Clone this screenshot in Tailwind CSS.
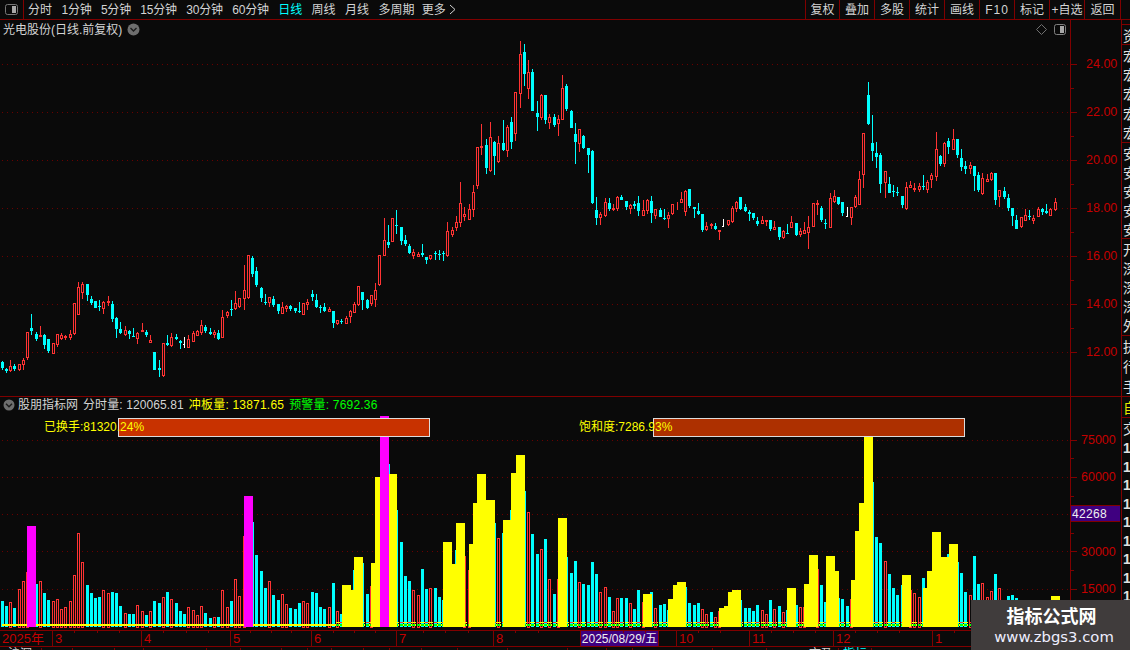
<!DOCTYPE html>
<html lang="zh">
<head>
<meta charset="utf-8">
<title>光电股份</title>
<script src="https://cdn.jsdelivr.net/npm/@tailwindcss/browser@4"></script>
</head>
<body class="w-[1130px] h-[650px] overflow-hidden relative bg-[#0a0a0a] text-[12px] leading-none text-[#d4d4d4] font-['Liberation_Sans','Noto_Sans_CJK_SC',sans-serif]">

<!-- toolbar -->
<header class="flex h-[20px] border-b border-[#800000] items-stretch">
  <div class="w-[24px] border-r border-[#800000] flex items-center justify-center">
    <svg width="13" height="11" viewBox="0 0 13 11"><rect x="0.5" y="0.5" width="12" height="10" rx="2" fill="none" stroke="#777"/><rect x="7" y="2" width="4" height="7" fill="#a8a8a8"/></svg>
  </div>
  <nav class="flex items-center gap-[9.4px] pl-[4px]">
    <span>分时</span><span class="tracking-[-0.2px]">1分钟</span><span class="tracking-[-0.2px]">5分钟</span><span class="tracking-[-0.2px]">15分钟</span><span class="tracking-[-0.2px]">30分钟</span><span class="tracking-[-0.2px]">60分钟</span>
    <span class="text-[#00ffff]">日线</span><span>周线</span><span>月线</span><span>多周期</span>
    <span class="-ml-[2px] flex items-center gap-[3px]">更多
      <svg width="7" height="11" viewBox="0 0 7 11"><path d="M1 1l5 4.5L1 10" fill="none" stroke="#d4d4d4"/></svg>
    </span>
  </nav>
  <div class="ml-auto flex items-stretch mr-[9px]">
    <span class="w-[34px] border-l border-[#800000] flex items-center justify-center">复权</span>
    <span class="w-[35px] border-l border-[#800000] flex items-center justify-center">叠加</span>
    <span class="w-[35px] border-l border-[#800000] flex items-center justify-center">多股</span>
    <span class="w-[35px] border-l border-[#800000] flex items-center justify-center">统计</span>
    <span class="w-[35px] border-l border-[#800000] flex items-center justify-center">画线</span>
    <span class="w-[35px] border-l border-[#800000] flex items-center justify-center tracking-[1px]">F10</span>
    <span class="w-[35px] border-l border-[#800000] flex items-center justify-center">标记</span>
    <span class="w-[35px] border-l border-[#800000] flex items-center justify-center whitespace-nowrap">+自选</span>
    <span class="w-[37px] border-x border-[#800000] flex items-center justify-center">返回</span>
  </div>
</header>

<div class="flex h-[630px]">
  <!-- charts column -->
  <main class="w-[1070px] shrink-0 flex flex-col">
    <section class="relative h-[377px] border-b border-[#800000]">
      <svg id="price" class="block" width="1070" height="376" viewBox="0 20 1070 376" shape-rendering="crispEdges"></svg>
      <div class="absolute left-[3px] top-[3px] flex items-center gap-[5px]">
        <span class="text-[12px]">光电股份(日线.前复权)</span>
        <svg width="13" height="13" viewBox="0 0 13 13"><circle cx="6.5" cy="6.5" r="6" fill="#6e6e6e"/><path d="M3.5 5l3 3 3-3" fill="none" stroke="#1c1c1c" stroke-width="1.4"/></svg>
      </div>
      <div class="absolute right-[4px] top-[4px] flex items-center gap-[7px]">
        <svg width="11" height="11" viewBox="0 0 11 11"><path d="M5.5 .5l5 5-5 5-5-5z" fill="none" stroke="#707070"/></svg>
        <svg width="12" height="11" viewBox="0 0 12 11"><rect x="0.5" y="0.5" width="11" height="10" rx="2" fill="none" stroke="#808080"/><rect x="6" y="2" width="4" height="7" fill="#a8a8a8"/></svg>
      </div>
    </section>

    <section class="relative h-[233px]">
      <svg id="vol" class="block" width="1070" height="233" viewBox="0 397 1070 233" shape-rendering="crispEdges"></svg>
      <div class="absolute left-[3px] top-[1px] flex items-center h-[14px] whitespace-nowrap">
        <svg class="mr-[3px]" width="12" height="12" viewBox="0 0 12 12"><circle cx="6" cy="6" r="5.5" fill="#6e6e6e"/><path d="M3 4.7l3 3 3-3" fill="none" stroke="#1c1c1c" stroke-width="1.4"/></svg>
        <span>股朋指标网</span>
        <span class="ml-[5px] tracking-[0.1px]">分时量: 120065.81</span>
        <span class="ml-[5px] tracking-[0.2px] text-[#ffff00]">冲板量: 13871.65</span>
        <span class="ml-[5px] tracking-[0.2px] text-[#00ff00]">预警量: 7692.36</span>
      </div>
      <div class="absolute left-[118px] top-[21px] w-[312px] h-[19px] bg-[#c83200] border border-[#dcdcdc]"></div>
      <div class="absolute left-[44px] top-[24px] text-[#ffff00] whitespace-nowrap">已换手:81320.24%</div>
      <div class="absolute left-[653px] top-[21px] w-[312px] h-[19px] bg-[#ad3000] border border-[#dcdcdc]"></div>
      <div class="absolute left-[579px] top-[24px] text-[#ffff00] whitespace-nowrap">饱和度:7286.93%</div>
    </section>

    <!-- date axis -->
    <div class="relative flex h-[17px] w-[1130px] border-t border-b border-[#800000] text-[#c40000] text-[13px] items-stretch">
      <span class="w-[52px] pl-[2px] flex items-center">2025年</span>
      <span class="w-[89px] pl-[2px] flex items-center border-l border-[#800000]">3</span>
      <span class="w-[89px] pl-[2px] flex items-center border-l border-[#800000]">4</span>
      <span class="w-[81px] pl-[2px] flex items-center border-l border-[#800000]">5</span>
      <span class="w-[85px] pl-[2px] flex items-center border-l border-[#800000]">6</span>
      <span class="w-[97px] pl-[2px] flex items-center border-l border-[#800000]">7</span>
      <span class="w-[87px] pl-[2px] flex items-center border-l border-[#800000]">8</span>
      <span class="w-[79px] flex items-center justify-center bg-[#3f0080] text-[#f0f0f0] text-[12px] border-x border-[#800000] whitespace-nowrap">2025/08/29/五</span>
      <span class="w-[17px]"></span>
      <span class="w-[73px] pl-[2px] flex items-center border-l border-[#800000]">10</span>
      <span class="w-[84px] pl-[2px] flex items-center border-l border-[#800000]">11</span>
      <span class="w-[99px] pl-[2px] flex items-center border-l border-[#800000]">12</span>
      <span class="w-[39px] pl-[2px] flex items-center border-l border-[#800000]">1</span>
      <svg id="dateticks" class="absolute left-0 top-0" width="971" height="3" shape-rendering="crispEdges"></svg>
    </div>
    <!-- tabs, almost entirely below the fold -->
    <div class="flex h-[3px] w-[971px] overflow-hidden whitespace-nowrap items-start pt-[1px]">
      <span class="w-[42px] border-r border-[#800000] h-[12px] pl-[8px]">沪深</span>
      <span class="w-[31px] border-r border-[#800000] h-[12px]"></span>
      <span class="w-[42px] border-r border-[#800000] h-[12px]"></span>
      <span class="w-[29px] border-r border-[#800000] h-[12px]"></span>
      <span class="w-[63px] border-r border-[#800000] h-[12px]"></span>
      <span class="w-[34px] border-r border-[#800000] h-[12px]"></span>
      <span class="w-[41px] border-r border-[#800000] h-[12px]"></span>
      <span class="w-[26px] border-r border-[#800000] h-[12px]"></span>
      <span class="w-[24px] border-r border-[#800000] h-[12px]"></span>
      <span class="w-[32px] border-r border-[#800000] h-[12px]"></span>
      <span class="w-[26px] border-r border-[#800000] h-[12px]"></span>
      <span class="w-[32px] border-r border-[#800000] h-[12px]"></span>
      <span class="w-[36px] border-r border-[#800000] h-[12px]"></span>
      <span class="w-[50px] border-r border-[#800000] h-[12px]"></span>
      <span class="w-[60px] border-r border-[#800000] h-[12px]"></span>
      <span class="w-[39px] border-r border-[#800000] h-[12px]"></span>
      <span class="w-[26px] border-r border-[#800000] h-[12px]"></span>
      <span class="w-[80px] border-r border-[#800000] h-[12px]"></span>
      <span class="w-[54px] border-r border-[#800000] h-[12px]"></span>
      <span class="w-[72px] border-r border-[#800000] h-[12px] text-right pr-[5px]">市盈</span>
      <span class="w-[33px] border-r border-[#800000] h-[12px] text-[#00ffff] text-center">指标</span>
    </div>
  </main>

  <!-- value axis -->
  <aside class="w-[51px] shrink-0 flex flex-col border-l border-[#800000] text-[#c40000] text-[12.5px]">
    <div class="h-[377px] border-b border-[#800000] pt-[32px] shrink-0">
      <div class="h-[24px] flex items-center"><i class="block w-[6px] h-px bg-[#800000]"></i><span class="ml-[9px]">24.00</span></div>
      <div class="h-[24px] flex items-center"><i class="block w-[3px] h-px bg-[#800000]"></i></div>
      <div class="h-[24px] flex items-center"><i class="block w-[6px] h-px bg-[#800000]"></i><span class="ml-[9px]">22.00</span></div>
      <div class="h-[24px] flex items-center"><i class="block w-[3px] h-px bg-[#800000]"></i></div>
      <div class="h-[24px] flex items-center"><i class="block w-[6px] h-px bg-[#800000]"></i><span class="ml-[9px]">20.00</span></div>
      <div class="h-[24px] flex items-center"><i class="block w-[3px] h-px bg-[#800000]"></i></div>
      <div class="h-[24px] flex items-center"><i class="block w-[6px] h-px bg-[#800000]"></i><span class="ml-[9px]">18.00</span></div>
      <div class="h-[24px] flex items-center"><i class="block w-[3px] h-px bg-[#800000]"></i></div>
      <div class="h-[24px] flex items-center"><i class="block w-[6px] h-px bg-[#800000]"></i><span class="ml-[9px]">16.00</span></div>
      <div class="h-[24px] flex items-center"><i class="block w-[3px] h-px bg-[#800000]"></i></div>
      <div class="h-[24px] flex items-center"><i class="block w-[6px] h-px bg-[#800000]"></i><span class="ml-[9px]">14.00</span></div>
      <div class="h-[24px] flex items-center"><i class="block w-[3px] h-px bg-[#800000]"></i></div>
      <div class="h-[24px] flex items-center"><i class="block w-[6px] h-px bg-[#800000]"></i><span class="ml-[9px]">12.00</span></div>
    </div>
    <div class="pt-[34px]">
      <div class="h-[18.6px] flex items-center"><i class="block w-[6px] h-px bg-[#800000]"></i><span class="ml-[4px]">75000</span></div>
      <div class="h-[18.6px] flex items-center"><i class="block w-[3px] h-px bg-[#800000]"></i></div>
      <div class="h-[18.6px] flex items-center"><i class="block w-[6px] h-px bg-[#800000]"></i><span class="ml-[4px]">60000</span></div>
      <div class="h-[18.6px] flex items-center"><i class="block w-[3px] h-px bg-[#800000]"></i></div>
      <div class="h-[18.6px] flex items-center"><span class="relative -top-[1px] w-[49px] h-[17px] bg-[#3f0080] border-y border-[#800000] text-[#f0f0f0] text-[12px] flex items-center pl-[1px] tracking-[0.3px]">42268</span></div>
      <div class="h-[18.6px] flex items-center"><i class="block w-[3px] h-px bg-[#800000]"></i></div>
      <div class="h-[18.6px] flex items-center"><i class="block w-[6px] h-px bg-[#800000]"></i><span class="ml-[4px]">30000</span></div>
      <div class="h-[18.6px] flex items-center"><i class="block w-[3px] h-px bg-[#800000]"></i></div>
      <div class="h-[18.6px] flex items-center"><i class="block w-[6px] h-px bg-[#800000]"></i><span class="ml-[4px]">15000</span></div>
    </div>
  </aside>

  <!-- cropped list on the far right -->
  <aside class="w-[9px] shrink-0 border-l border-[#800000] overflow-hidden text-[14px] whitespace-nowrap pl-[1px] font-['Noto_Sans_CJK_SC',sans-serif] text-[#e0e0e0]">
    <div class="h-[5px] border-b border-[#800000] -ml-[1px]"></div>
    <div class="h-[20px] border-b border-[#800000] -ml-[1px] pl-[1px] flex items-center">资</div>
    <div class="h-[98px] border-b border-[#800000] -ml-[1px] pl-[1px] flex flex-col justify-around"><span>宏</span><span>宏</span><span>宏</span><span>宏</span><span>宏</span></div>
    <div class="h-[96px] border-b border-[#800000] -ml-[1px] pl-[1px] flex flex-col justify-around"><span>安</span><span>安</span><span>安</span><span>安</span><span>安</span></div>
    <div class="h-[97px] border-b border-[#800000] -ml-[1px] pl-[1px] flex flex-col justify-around"><span>开</span><span>深</span><span>深</span><span>深</span><span>外</span></div>
    <div class="h-[61px] border-b border-[#800000] -ml-[1px] pl-[1px] flex flex-col justify-around"><span>执</span><span>行</span><span>手</span></div>
    <div class="h-[21px] border-b border-[#800000] -ml-[1px] pl-[1px] flex items-center text-[#e8e800]">自</div>
    <div class="h-[19px] -ml-[1px] pl-[1px] flex items-center">交</div>
    <div class="font-['Liberation_Sans',sans-serif] font-bold text-[14px] -ml-[1px] pl-[1px] pt-[2px]">
      <div class="h-[18.5px] flex items-center">1</div><div class="h-[18.5px] flex items-center">1</div><div class="h-[18.5px] flex items-center">1</div><div class="h-[18.5px] flex items-center">1</div><div class="h-[18.5px] flex items-center">1</div><div class="h-[18.5px] flex items-center">1</div><div class="h-[18.5px] flex items-center">1</div><div class="h-[18.5px] flex items-center">1</div><div class="h-[18.5px] flex items-center">1</div>
    </div>
  </aside>
</div>

<!-- watermark -->
<div class="absolute left-[971px] top-[600px] w-[159px] h-[50px] bg-[#403c3c] flex flex-col items-center pt-[5px] gap-[3px] pl-[2px]">
  <span class="text-white font-bold text-[18px] leading-[20px] font-['Noto_Sans_CJK_SC',sans-serif]">指标公式网</span>
  <span class="ml-[5px] text-[#eeeeff] text-[14.8px] leading-[18px] font-['DejaVu_Sans',sans-serif]">www.zbgs3.com</span>
</div>

<script>
var bg='#0a0a0a',RED='#ff3333',CY='#00ffff',GRID='#6a0000';
function lx(i){return 1+Math.floor(i*4.2458+0.1);}
function R(x,y,w,h,f){return '<rect x="'+x+'" y="'+y+'" width="'+w+'" height="'+h+'" fill="'+f+'"/>';}
function Box(x,y,w,h,s){return '<rect x="'+(x+.5)+'" y="'+(y+.5)+'" width="'+(w-1)+'" height="'+Math.max(h-1,0)+'" fill="'+bg+'" stroke="'+s+'"/>';}
function dots(y){var s='';for(var x=2;x<1070;x+=5)s+=R(x,y,1,1,GRID);return s;}
var A=[['c',486,504,484,510],['c',507,513,504,518],['r',499,514,480,516],['c',497,507,492,513],['r',493,509,493,512],['r',481,494,475,510],['r',397,473,397,480],['c',384,393,342,405],['c',402,417,396,423],['r',405,410,378,411],['c',405,435,402,447],['c',417,453,417,459],['r',430,461,430,461],['r',403,435,403,441],['r',405,417,399,420],['r',408,414,405,420],['r',403,414,390,420],['r',310,402,310,405],['r',262,344,246,345],['r',252,278,246,297],['c',252,285,252,303],['c',297,309,288,315],['c',303,324,303,324],['c',318,321,300,333],['r',306,327,303,342],['r',304,310,288,318],['c',312,357,303,366],['c',354,387,351,414],['c',387,399,366,402],['r',391,405,378,408],['c',393,402,390,417],['c',408,411,384,411],['r',400,417,396,432],['r',391,396,369,396],['c',396,405,390,411],['r',421,429,405,429],['c',456,510,456,510],['c',504,510,480,531],['r',430,528,430,531],['c',429,435,405,438],['r',412,438,400,441],['c',411,417,402,420],['c',423,429,420,447],['w',432,435,411,444],['r',418,443,405,444],['r',400,426,394,426],['r',394,408,390,408],['r',376,399,360,405],['c',381,393,375,399],['c',396,402,384,405],['r',396,405,390,414],['c',399,417,390,420],['r',351,413,330,414],['r',336,348,333,354],['c',327,330,300,348],['r',310,327,273,330],['r',295,321,295,323],['r',271,296,195,330],['r',166,295,166,297],['c',174,222,168,231],['c',213,255,201,261],['c',264,294,261,306],['c',306,309,282,315],['r',292,309,291,321],['c',297,315,288,321],['c',312,333,312,342],['r',322,342,306,342],['r',318,327,315,336],['c',318,327,315,333],['c',324,333,324,339],['c',333,336,306,339],['r',310,344,310,345],['r',306,315,297,330],['c',282,291,270,303],['c',300,321,282,324],['c',321,324,315,339],['c',321,333,309,336],['r',327,335,321,336],['c',333,369,333,384],['r',361,372,360,375],['c',363,366,357,372],['r',354,371,348,372],['r',334,350,331,369],['r',313,339,306,339],['r',259,315,259,318],['c',276,300,276,330],['c',300,324,297,327],['r',286,312,286,318],['r',271,300,249,321],['r',166,255,166,258],['r',121,167,54,168],['c',126,135,75,144],['r',55,125,55,126],['c',75,78,30,102]];
var B=[['c',591,633,591,645],['c',630,642,615,648],['c',648,669,642,672],['r',667,678,657,687],['r',672,681,666,681],['c',669,675,642,681],['c',681,690,681,702],['r',676,687,676,690],['c',669,672,663,690],['c',672,675,660,690],['c',669,672,663,693],['r',603,678,576,681],['r',600,615,591,621],['r',576,594,558,603],['r',520,578,456,591],['r',552,561,531,573],['r',538,569,522,570],['r',487,539,465,561],['r',352,467,352,477],['r',348,354,282,375],['c',345,414,327,432],['r',322,423,276,426],['c',336,378,333,435],['r',340,396,318,399],['c',339,360,270,363],['r',292,362,285,381],['c',276,336,261,357],['r',187,311,187,333],['r',72,191,33,234],['c',66,132,42,168],['r',126,177,90,207],['c',126,243,117,243],['c',249,261,213,303],['r',195,264,192,270],['c',195,270,195,282],['r',262,278,252,297],['c',261,285,252,291],['r',268,281,255,318],['r',174,269,135,270],['c',168,237,162,243],['c',243,294,240,294],['c',312,336,279,402],['r',298,341,298,366],['c',318,354,315,357],['c',354,375,354,429],['c',363,519,360,522],['c',540,564,501,585],['r',552,563,546,585],['r',516,557,504,561],['c',519,537,504,543],['r',534,540,522,543],['r',501,536,498,543],['c',501,510,495,510],['c',513,531,513,540],['r',526,537,522,552],['c',522,528,513,537],['c',519,543,498,558],['r',541,557,510,558],['r',510,542,507,552],['c',513,549,498,579],['r',538,558,538,567],['c',540,561,534,561],['c',564,567,537,570],['r',556,566,546,594]];
var C=[['r',403,431,403,434],['r',400,402,397,420],['r',388,399,366,399],['r',363,426,360,438],['c',357,408,357,414],['c',411,417,411,444],['c',423,432,399,435],['c',432,480,432,486],['r',469,481,456,483],['r',462,468,459,477],['c',468,477,459,480],['r',480,485,480,510],['w',468,471,447,472],['r',451,465,450,468],['r',415,455,408,459],['r',396,417,393,426],['c',381,417,381,420],['c',411,423,403,426],['c',426,432,420,453],['c',429,444,429,450],['c',453,462,441,468],['r',451,461,438,462],['r',450,456,450,468],['c',450,477,450,483],['r',472,480,453,480],['c',471,501,471,510],['r',483,504,480,507],['c',489,492,462,492],['r',457,473,438,474],['c',459,495,459,498],['r',483,495,474,501],['r',480,491,456,492],['r',471,489,438,537],['r',400,470,400,471],['r',400,405,390,435],['c',414,450,408,456],['c',460,463,447,477],['r',385,473,369,474],['r',378,396,360,399],['c',381,402,381,405],['c',396,429,396,438],['w',437,440,411,440],['r',412,444,411,465],['r',381,411,375,414],['r',328,405,303,405],['r',190,314,190,354],['c',75,162,36,165],['c',219,243,135,273],['c',249,261,216,294],['c',255,342,249,369],['r',304,339,304,384],['c',342,369,321,369],['c',363,366,345,381],['c',366,369,351,378],['c',378,405,378,414],['r',351,417,336,420],['r',346,353,333,354],['r',354,359,339,366],['r',349,360,339,366],['c',348,351,315,360],['r',336,360,330,369],['r',315,330,309,354],['r',238,322,186,333],['c',258,282,255,288],['r',220,282,216,291],['c',213,231,204,252],['r',208,239,177,240],['c',207,255,207,264],['c',264,291,237,303],['c',288,297,273,312],['r',286,297,276,312],['c',288,318,288,363],['c',315,360,306,366],['r',325,372,309,375],['r',327,335,312,336],['r',309,330,306,333],['c',309,390,309,405],['r',361,381,361,411],['c',363,381,351,387],['c',384,414,372,423],['c',414,438,414,468],['c',450,477,435,477],['r',442,471,441,474],['r',435,453,417,453],['c',438,441,420,450],['r',444,453,435,462],['r',417,441,411,441],['c',417,426,414,435],['c',423,429,402,432],['r',418,438,414,438],['r',397,420,384,423]];
var s='';[64,112,160,208,256,304,352].forEach(function(y){s+=dots(y);});
var i=0;
function draw(list,off){list.forEach(function(c){var x=lx(i),bt=Math.round(off+c[1]/3),bb=Math.round(off+c[2]/3),wt=Math.round(off+c[3]/3),wb=Math.round(off+c[4]/3);
 var col=c[0]=='c'?CY:c[0]=='r'?RED:'#ffffff';
 s+=R(x+1,wt,1,Math.max(wb-wt,1),col);
 if(c[0]=='c')s+=R(x,bt,3,Math.max(bb-bt,1),col);
 else if(c[0]=='r')s+=Box(x,bt,3,Math.max(bb-bt,1),col);
 else s+=R(x,bt,2,1,col);
 i++;});}
draw(A,200);draw(B,30);draw(C,70);
document.getElementById('price').innerHTML=s;

/* volume: [kind, zoom top] by index */
var V1=['c333','c348','r336','c354','r297','r273','r246','m108','c282','r273','c309','c330','r333','r327','r357','r351','r333','r255','r129','r216','c285','c309','c324','c321','r300','r309','c306','c309','c348','r369','c372','c372','r345','r363','c375','r363','c333','c339','r321','c306','r327','c339','c363','c372','r351','r360','r375','r348','c369','c384','r381','c381','r300','r351','c333','r267','r318','r138','m18','c96','c195','c243','c294','r273','c315','c330','r312','r342','c354','c357','c339','r333','r339','c306','c309','c351','c357','r351','c279','r363','c372','y285','y300','c240','y201','c219','c312','r288','y219'];
var V2=['y201','m18','c162','y192','c300','c396','c498','c513','r540','r555','c477','c537','r534','c534','c561','c570','y396','y462','c420','y339','r438','r480','y402','y279','y192','y300','y270','c339','r384','c369','y330','c300','y189','y135','c243','r306','c372','c432','r417','c387','r507','c552','r507','y324','c441','c489','c453','r516','c522','c525','c456','c492','r546','r531','c561','r603','r564','c564','c564','r579','c597','c540','r576','y552','c546','r594','c585','c582','c600','y567','y525','y516','c531','c579','c585','c579','r597','r612','c606','r620','r603','y594','y588','y546','y540','c570','c594','c594'];
var V3=['c633','c615','r630','r642','c600','r627','c618','r636','c630','y564','c615','r621','r621','y552','y465','r507','c555','c606','y468','y513','c594','c597','c618','r597','y540','y393','y309','y60','c246','c411','c429','r483','c522','c564','c585','c555','y525','r570','r579','r591','c534','y564','y513','y396','y471','y471','c462','y432','c486','c519','c576','r585','c468','c552','r549','r591','r573','c522','r564','c650','c588','c585','c594','c630','r640','c630','c650','r650','c650','r650','c650','y588'];
var all=[];V1.forEach(function(v){all.push([v[0],490+(+v.slice(1))/3]);});V2.forEach(function(v){all.push([v[0],410+(+v.slice(1))/3]);});V3.forEach(function(v){all.push([v[0],400+(+v.slice(1))/3]);});
var BASE=627,t='';[440,477,514,551,589].forEach(function(y){t+=dots(y);});
all.forEach(function(b,k){var y=Math.round(b[1]),x=lx(k);if(b[0]=='c')t+=R(x,y,3,BASE-y,CY);else if(b[0]=='r')t+=Box(x,y,3,BASE-y+1,RED);});
/* signal stripes */
for(var x=2;x<335;x+=6)t+=R(x,624,5.5,2,'#ffff00');
for(var q=79;q<232;q++){var px=lx(q);t+=R(px,622,3,1,q%2?'#ffff00':'#ff3333')+R(px+3,622,1,1,'#ffff00');t+=R(px,624,3,2,'#00ff00')+R(px+3,624,1,2,'#ffff00');}
all.forEach(function(b,k){var y=Math.round(b[1]);if(b[0]=='y')t+=R(lx(k)-3,y,9,BASE-y,'#ffff00');});
all.forEach(function(b,k){var y=Math.round(b[1]);if(b[0]=='m')t+=R(lx(k)-3,y,9,BASE-y,'#ff00ff');});
document.getElementById('vol').innerHTML=t;

var d='';[74,97,119,163,186,208,250,271,291,333,354,375,423,445,468,515,538,601,623,645,698,720,771,793,815,855,877,899,954,976].forEach(function(x){d+=R(x,0,1,2,'#800000');});
document.getElementById('dateticks').innerHTML=d;
</script>
</body>
</html>
